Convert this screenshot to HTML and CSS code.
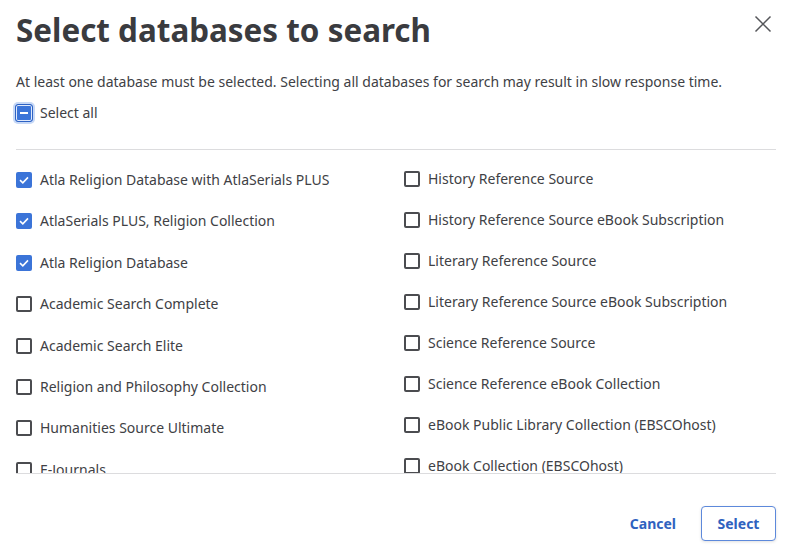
FILE: index.html
```html
<!DOCTYPE html>
<html lang="en">
<head>
<meta charset="utf-8">
<title>Select databases to search</title>
<link rel="stylesheet" href="styles.css">
</head>
<body>
<div class="dialog">
  <header class="head">
    <h1 class="title">Select databases to search</h1>
    <button class="close" aria-label="Close">
      <svg width="18" height="18" viewBox="0 0 18 18"><path d="M1.5 1.5 L16.5 16.5 M16.5 1.5 L1.5 16.5" stroke="#55565a" stroke-width="1.5" fill="none"/></svg>
    </button>
  </header>
  <p class="desc">At least one database must be selected. Selecting all databases for search may result in slow response time.</p>
  <label class="item all">
    <span class="box indet"><span class="dash"></span></span>
    <span>Select all</span>
  </label>
  <div class="list">
    <div class="col left">
      <label class="item"><span class="box on"><svg viewBox="0 0 16 16" width="16" height="16"><path d="M4 8.2 L6.8 10.8 L12 5.4" stroke="#fff" stroke-width="1.6" fill="none"/></svg></span><span>Atla Religion Database with AtlaSerials PLUS</span></label>
      <label class="item"><span class="box on"><svg viewBox="0 0 16 16" width="16" height="16"><path d="M4 8.2 L6.8 10.8 L12 5.4" stroke="#fff" stroke-width="1.6" fill="none"/></svg></span><span>AtlaSerials PLUS, Religion Collection</span></label>
      <label class="item"><span class="box on"><svg viewBox="0 0 16 16" width="16" height="16"><path d="M4 8.2 L6.8 10.8 L12 5.4" stroke="#fff" stroke-width="1.6" fill="none"/></svg></span><span>Atla Religion Database</span></label>
      <label class="item"><span class="box"></span><span>Academic Search Complete</span></label>
      <label class="item"><span class="box"></span><span>Academic Search Elite</span></label>
      <label class="item"><span class="box"></span><span>Religion and Philosophy Collection</span></label>
      <label class="item"><span class="box"></span><span>Humanities Source Ultimate</span></label>
      <label class="item"><span class="box"></span><span>E-Journals</span></label>
    </div>
    <div class="col right">
      <label class="item"><span class="box"></span><span>History Reference Source</span></label>
      <label class="item"><span class="box"></span><span>History Reference Source eBook Subscription</span></label>
      <label class="item"><span class="box"></span><span>Literary Reference Source</span></label>
      <label class="item"><span class="box"></span><span>Literary Reference Source eBook Subscription</span></label>
      <label class="item"><span class="box"></span><span>Science Reference Source</span></label>
      <label class="item"><span class="box"></span><span>Science Reference eBook Collection</span></label>
      <label class="item"><span class="box"></span><span>eBook Public Library Collection (EBSCOhost)</span></label>
      <label class="item"><span class="box"></span><span>eBook Collection (EBSCOhost)</span></label>
    </div>
  </div>
  <footer class="foot">
    <button class="btn link">Cancel</button>
    <button class="btn outline">Select</button>
  </footer>
</div>
</body>
</html>
```
FILE: styles.css
```css
* { box-sizing: border-box; }
html, body { margin: 0; padding: 0; background: #fff; }
body {
  font-family: "Noto Sans", "Open Sans", sans-serif;
  color: #404145;
  font-size: 14px;
}
.dialog {
  width: 786px;
  height: 550px;
  padding: 0 10px 0 16px;
  display: flex;
  flex-direction: column;
}
.head {
  display: flex;
  justify-content: space-between;
  align-items: flex-start;
  padding-top: 10px;
}
.title {
  margin: 0;
  font-size: 31.4px;
  line-height: 40px;
  font-weight: 700;
  color: #3a3b3f;
}
.close {
  border: 0;
  background: none;
  padding: 0;
  margin-top: 5px;
  margin-right: 4px;
  width: 18px;
  height: 18px;
  cursor: pointer;
}
.close svg { display: block; }
.desc {
  margin: 22px 0 0;
  line-height: 20px;
}
.item {
  display: flex;
  align-items: center;
  gap: 8px;
  height: 20px;
  line-height: 20px;
  white-space: nowrap;
}
.all {
  margin-top: 11px;
  margin-bottom: 26px;
}
.box {
  width: 16px;
  height: 16px;
  border: 2px solid #4b4c50;
  border-radius: 2px;
  flex: none;
  display: flex;
  align-items: center;
  justify-content: center;
}
.box.on {
  border: 0;
  background: #3b74d8;
}
.box.on svg { display: block; }
.box.indet {
  width: 18px;
  height: 18px;
  margin-left: -1px;
  margin-right: -1px;
  border: 1px solid #2d62c4;
  border-radius: 3px;
  background: #3b74d8;
  box-shadow: inset 0 0 0 1px #dfe9fb, 0 0 0 2px #c6d8f6;
}
.dash {
  width: 8px;
  height: 2px;
  background: #fff;
}
.list {
  border-top: 1px solid #dcdcde;
  border-bottom: 1px solid #dcdcde;
  width: 760px;
  height: 325px;
  overflow: hidden;
  display: grid;
  grid-template-columns: 380px 1fr;
  column-gap: 8px;
}
.col {
  display: flex;
  flex-direction: column;
}
.col.left { padding-top: 20px; gap: 21.4px; }
.col.right { padding-top: 19px; gap: 21px; }
.foot {
  display: flex;
  justify-content: flex-end;
  align-items: center;
  gap: 8px;
  padding-top: 32px;
  width: 760px;
}
.btn {
  font-family: "Noto Sans", "Open Sans", sans-serif;
  font-size: 14px;
  font-weight: 700;
  color: #2f62c0;
  background: #fff;
  height: 35px;
  border-radius: 4px;
  cursor: pointer;
}
.btn.link {
  border: 0;
  padding: 0 17px;
}
.btn.outline {
  border: 1px solid #5d89db;
  padding: 0 14px;
  width: 75px;
  box-shadow: 0 1px 3px rgba(0,0,0,0.12);
}
```
